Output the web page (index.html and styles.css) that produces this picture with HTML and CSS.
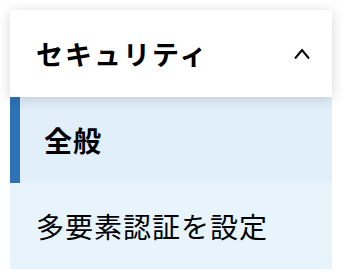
FILE: index.html
```html
<!DOCTYPE html>
<html lang="ja">
<head>
<meta charset="utf-8">
<link rel="stylesheet" href="styles.css">
</head>
<body>
<div class="menu">
  <div class="menu-header">
    <span class="menu-title">セキュリティ</span>
    <svg class="chevron" width="18" height="13" viewBox="0 0 18 13"><path d="M2 11.5 L9 3 L16 11.5" fill="none" stroke="#000" stroke-width="2"/></svg>
  </div>
  <div class="menu-item active">全般</div>
  <div class="menu-item">多要素認証を設定</div>
</div>
</body>
</html>
```
FILE: styles.css
```css
html, body {
  margin: 0;
  padding: 0;
  background: #fff;
}
body {
  font-family: "Noto Sans CJK JP", "Noto Sans", sans-serif;
  color: #000;
}
.menu {
  margin: 10px 12px 0 10px;
  width: 322px;
}
.menu-header {
  position: relative;
  z-index: 1;
  height: 87px;
  box-sizing: border-box;
  display: flex;
  align-items: center;
  justify-content: space-between;
  padding: 0 21px 0 26px;
  background: #fff;
  box-shadow: 0 2px 12px rgba(0, 0, 0, 0.16);
}
.menu-title {
  font-size: 27px;
  font-weight: 700;
  letter-spacing: 2px;
}
.chevron {
  display: block;
}
.menu-item {
  height: 86px;
  box-sizing: border-box;
  display: flex;
  align-items: center;
  padding-left: 26px;
  font-size: 28px;
  letter-spacing: 1px;
  background: #e8f4fc;
}
.menu-item.active {
  background: #e1effb;
  border-left: 10px solid #2e72b7;
  padding-left: 24px;
  font-weight: 700;
}
```
